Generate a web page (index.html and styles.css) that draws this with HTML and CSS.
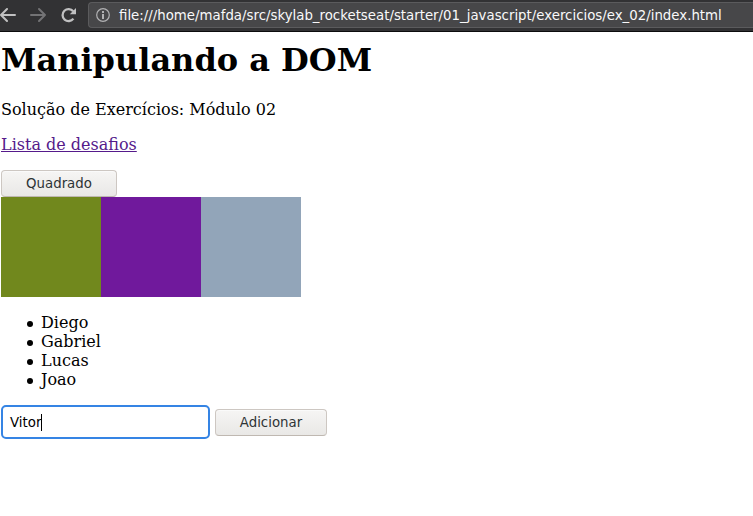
FILE: index.html
```html
<!DOCTYPE html>
<html lang="pt-BR">
<head>
<meta charset="utf-8">
<title>Manipulando a DOM</title>
<link rel="stylesheet" href="styles.css">
</head>
<body>
<header class="toolbar">
  <svg class="nav" width="84" height="31" viewBox="0 0 84 31" fill="none" stroke-width="2" stroke-linecap="round" stroke-linejoin="round">
    <path stroke="#c0c0c1" d="M15 15H1M7 9L1 15L7 21"/>
    <path stroke="#737375" d="M31 15H45M39 9L45 15L39 21"/>
    <path stroke="#c0c0c1" stroke-width="2.3" stroke-linecap="butt" d="M73.2 11.2A6 6 0 1 0 73.4 18.6"/>
    <path fill="#c0c0c1" d="M76 8V14.2H69.8Z"/>
  </svg>
  <div class="address">
    <svg class="info" width="14" height="14" viewBox="0 0 14 14" fill="none">
      <circle cx="7" cy="7" r="6.3" stroke="#b1b1b3" stroke-width="1.2"/>
      <path stroke="#b1b1b3" stroke-width="2" d="M7 3V5M7 6V11"/>
    </svg>
    <span class="url">file:///home/mafda/src/skylab_rocketseat/starter/01_javascript/exercicios/ex_02/index.html</span>
  </div>
</header>
<main class="page">
  <h1>Manipulando a DOM</h1>
  <p>Solução de Exercícios: Módulo 02</p>
  <p><a href="#">Lista de desafios</a></p>
  <button class="btn square-btn">Quadrado</button>
  <div class="squares">
    <div class="square olive"></div>
    <div class="square purple"></div>
    <div class="square blue"></div>
  </div>
  <ul>
    <li>Diego</li>
    <li>Gabriel</li>
    <li>Lucas</li>
    <li>Joao</li>
  </ul>
  <div class="form">
    <div class="field">Vitor<span class="caret"></span></div>
    <button class="btn add-btn">Adicionar</button>
  </div>
</main>
</body>
</html>
```
FILE: styles.css
```css
* { box-sizing: border-box; }
body {
  margin: 0;
  background: #fff;
  color: #000;
  font: 16px/19px "DejaVu Serif", serif;
  overflow: hidden;
}
.toolbar {
  display: flex;
  height: 32px;
  background: #323234;
  border-bottom: 1px solid #0c0c0d;
}
.nav { flex: none; display: block; }
.address {
  flex: 1;
  display: flex;
  align-items: center;
  height: 26px;
  margin: 2px 0 0 4px;
  padding-left: 7px;
  background: #474749;
  border: 1px solid #5b5b5d;
  border-right: 0;
  border-radius: 4px 0 0 4px;
}
.info { flex: none; }
.url {
  margin-left: 9px;
  padding-top: 2px;
  color: #f9f9fa;
  font: 13.333px/18px "DejaVu Sans", sans-serif;
  white-space: nowrap;
}
.page { padding: 10px 1px 0; }
h1 {
  margin: 0 0 21px;
  font-size: 32px;
  line-height: 37px;
}
p { margin: 0 0 16px; }
a { color: #551a8b; text-decoration: underline; }
.btn {
  display: block;
  height: 27px;
  margin: 0;
  padding: 0;
  border: 1px solid #cdc7c2;
  border-bottom-color: #bfb8b1;
  border-radius: 4px;
  background: linear-gradient(#f6f5f4, #e9e8e6);
  box-shadow: inset 0 1px #fafafa;
  color: #2e3436;
  font: 13.333px/16px "DejaVu Sans", sans-serif;
}
.square-btn { width: 116px; }
.add-btn { width: 112px; padding-top: 1px; }
.squares { display: flex; }
.square { width: 100px; height: 100px; }
.olive { background: #71881d; }
.purple { background: #70199c; }
.blue { background: #92a5b9; }
ul { margin: 16px 0; padding-left: 26px; list-style: none; }
li { display: flex; align-items: center; }
li::before {
  content: "";
  width: 6px;
  height: 6px;
  margin: 2px 8px 0 0;
  border-radius: 50%;
  background: #000;
}
.form { display: flex; align-items: center; gap: 5px; }
.field {
  display: flex;
  align-items: center;
  width: 209px;
  height: 34px;
  padding: 1px 0 0 7px;
  border: 2px solid #3584e4;
  border-radius: 5px;
  font: 13.333px/17px "DejaVu Sans", sans-serif;
}
.caret { width: 1px; height: 17px; margin-top: -1px; background: #000; }
```
